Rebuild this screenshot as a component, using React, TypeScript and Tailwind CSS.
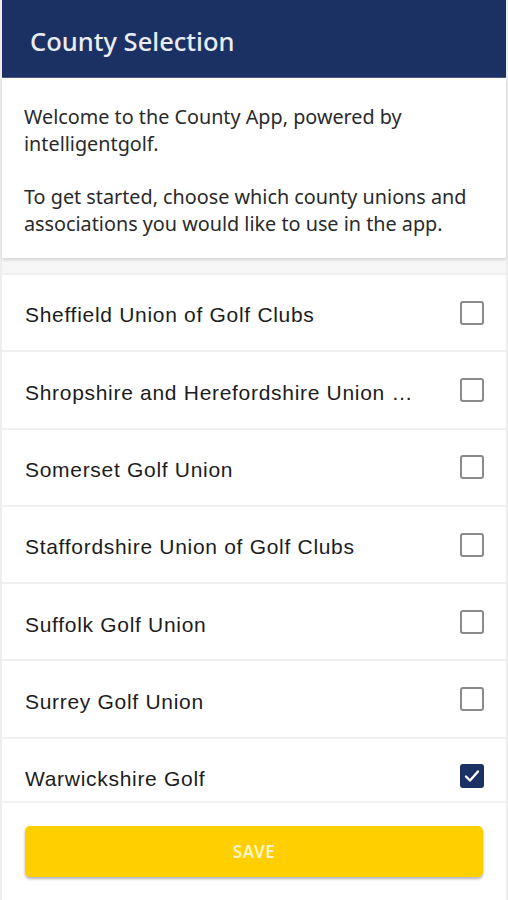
import React from "react";

const items: { name: string; checked: boolean }[] = [
  { name: "Sheffield Union of Golf Clubs", checked: false },
  { name: "Shropshire and Herefordshire Union \u2026", checked: false },
  { name: "Somerset Golf Union", checked: false },
  { name: "Staffordshire Union of Golf Clubs", checked: false },
  { name: "Suffolk Golf Union", checked: false },
  { name: "Surrey Golf Union", checked: false },
  { name: "Warwickshire Golf", checked: true },
];

function Box({ checked }: { checked: boolean }) {
  if (checked) {
    return (
      <div className="w-[24px] h-[24px] rounded-[3px] bg-[#1b3163] flex items-center justify-center">
        <svg width="16" height="14" viewBox="0 0 16 14" fill="none">
          <path d="M2 7.5 L6 11.5 L14 2.5" stroke="white" strokeWidth="2.4" strokeLinecap="round" strokeLinejoin="round" />
        </svg>
      </div>
    );
  }
  return <div className="w-[24px] h-[24px] rounded-[3px] border-2 border-[#8a8a8a] bg-white" />;
}

export default function App() {
  return (
    <div className="w-[508px] h-[900px] bg-[#eeeeee] px-[2px] flex flex-col overflow-hidden">
      <div className="h-[78px] shrink-0 bg-[#1b3163] flex items-center pl-[28px] border-b border-[#4a5a80]">
        <span className="text-[25.5px] text-[#e9ecf3] font-['Noto_Sans',sans-serif] font-medium mt-[6px]">County Selection</span>
      </div>
      <div className="shrink-0 bg-white px-[22px] pt-[25px] pb-[21px] font-['Noto_Sans',sans-serif] text-[19.8px] leading-[27px] text-[#2a2a2a] shadow-[0_2px_3px_rgba(0,0,0,0.14)] relative z-10">
        <p>Welcome to the County App, powered by intelligentgolf.</p>
        <p className="mt-[26px]">To get started, choose which county unions and associations you would like to use in the app.</p>
      </div>
      <div className="h-[15px] shrink-0 bg-[#f7f7f7]" />
      <div className="flex-1 min-h-0 overflow-hidden flex flex-col bg-white">
        {items.map((it, i) => (
          <div
            key={i}
            className="h-[77.3px] shrink-0 flex items-center justify-between pl-[23px] pr-[22px] border-t-2 border-[#f0f0f0]"
          >
            <span className="text-[21px] tracking-[0.7px] text-[#1c1c1c] font-['Liberation_Sans',Arial,sans-serif] whitespace-nowrap mt-[5px]">
              {it.name}
            </span>
            <Box checked={it.checked} />
          </div>
        ))}
      </div>
      <div className="h-[99px] shrink-0 bg-white border-t-2 border-[#f3f3f3] px-[23px] pt-[23px]">
        <button className="w-full h-[51px] rounded-[5px] bg-[#ffcf00] shadow-[0_2px_3px_rgba(0,0,0,0.3)] text-[#fff5c8] font-['Noto_Sans',sans-serif] font-semibold text-[17px] tracking-[0.5px]">
          SAVE
        </button>
      </div>
    </div>
  );
}
